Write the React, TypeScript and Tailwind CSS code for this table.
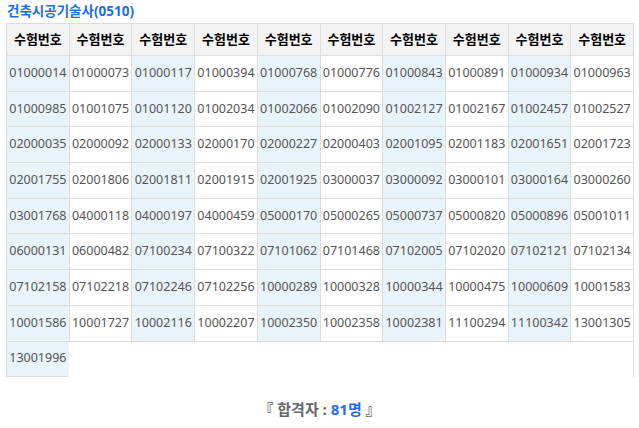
const numbers = [
  '01000014', '01000073', '01000117', '01000394', '01000768', '01000776', '01000843', '01000891', '01000934', '01000963',
  '01000985', '01001075', '01001120', '01002034', '01002066', '01002090', '01002127', '01002167', '01002457', '01002527',
  '02000035', '02000092', '02000133', '02000170', '02000227', '02000403', '02001095', '02001183', '02001651', '02001723',
  '02001755', '02001806', '02001811', '02001915', '02001925', '03000037', '03000092', '03000101', '03000164', '03000260',
  '03001768', '04000118', '04000197', '04000459', '05000170', '05000265', '05000737', '05000820', '05000896', '05001011',
  '06000131', '06000482', '07100234', '07100322', '07101062', '07101468', '07102005', '07102020', '07102121', '07102134',
  '07102158', '07102218', '07102246', '07102256', '10000289', '10000328', '10000344', '10000475', '10000609', '10001583',
  '10001586', '10001727', '10002116', '10002207', '10002350', '10002358', '10002381', '11100294', '11100342', '13001305',
  '13001996',
]

const font = { fontFamily: '"Noto Sans", "Noto Sans CJK KR", sans-serif' }

export default function App() {
  return (
    <div className="w-[639px] h-[428px] bg-white" style={font}>
      <div className="pl-[7px] pt-[2px] h-[23px] text-[13.5px] font-bold leading-[18px] text-[#1a6fe0]">
        건축시공기술사(0510)
      </div>

      <div className="ml-[6px] w-[628px] grid grid-cols-10 border-t border-r border-[#dddddd]">
        {Array.from({ length: 10 }).map((_, i) => (
          <div
            key={'h' + i}
            className="h-[32px] flex items-center justify-center border-l border-b border-[#dddddd] bg-[#f3f3f3] text-[13px] font-bold text-black"
          >
            수험번호
          </div>
        ))}
        {numbers.map((n, i) => (
          <div
            key={n}
            className={
              'h-[35.7px] flex items-center justify-center border-l border-b border-[#dddddd] text-[12.5px] text-[#555555] ' +
              (i % 2 === 0 ? 'bg-[#e9f3fa]' : 'bg-white')
            }
          >
            {n}
          </div>
        ))}
      </div>

      <div className="mt-[21px] text-center text-[15px] font-bold text-[#666666]">
        『 합격자 : <span className="text-[#1f6bff]">81명</span> 』
      </div>
    </div>
  )
}
